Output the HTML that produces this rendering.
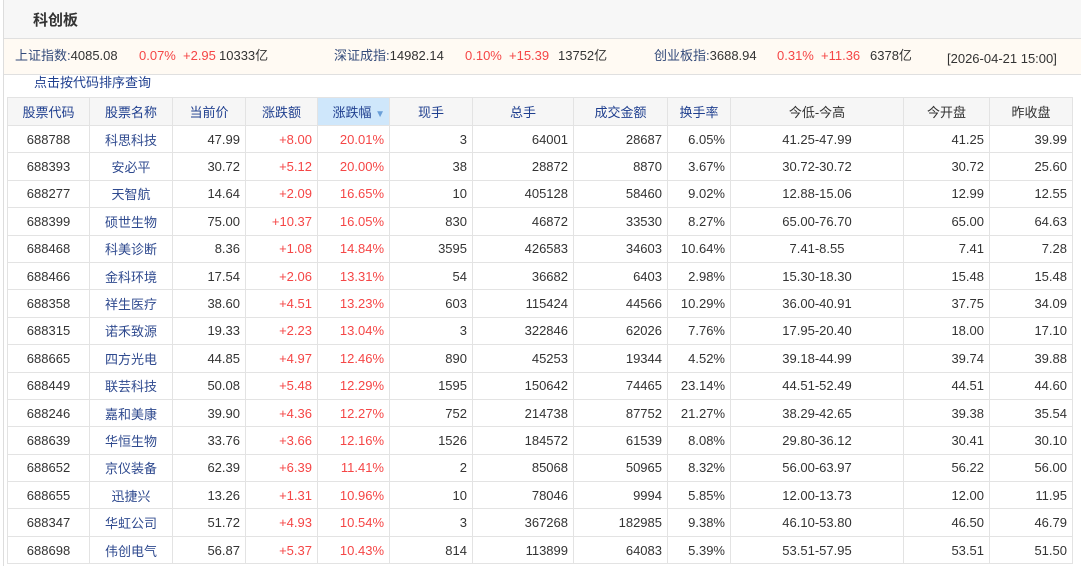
<!DOCTYPE html>
<html><head><meta charset="utf-8"><style>
body{margin:0;width:1081px;height:566px;overflow:hidden;background:#fff;font-family:"Liberation Sans","Noto Sans CJK SC",sans-serif;font-size:13px;color:#333;position:relative}
.lb{position:absolute;left:3px;top:0;width:1px;height:566px;background:#ddd}
.title{position:absolute;left:4px;top:0;width:1077px;height:38px;background:#f7f7f7;border-bottom:1px solid #e0e0e0}
.title b{position:absolute;left:29px;top:9px;font-size:15px;color:#333}
.idx{position:absolute;left:4px;top:39px;width:1077px;height:35px;background:#fffaf3;border-bottom:1px solid #e0e0e0}
.idx i{font-style:normal;position:absolute;top:9px;line-height:16px;white-space:nowrap}
.lab{color:#334a7a}.r{color:#f54646}
.link{position:absolute;left:34px;top:72px;color:#1f3f8f;font-size:13px}
table{position:absolute;left:7px;top:97px;border-collapse:collapse;table-layout:fixed}
td,th{border:1px solid #e3e3e3;height:26.4px;padding:0 5px;white-space:nowrap;font-weight:normal;overflow:hidden}
th{background:#f6f6f6;color:#1f3f8f;text-align:center;height:27px}
th.s{background:#cfe7fb;padding:0;text-align:right;padding-right:4px}
th.d{color:#333}
td{text-align:right}
td.c{text-align:center}
td.n{text-align:center;color:#2f4a8f}
td.red{color:#f54646}
</style></head><body>
<div class="lb"></div>
<div class="title"><b>科创板</b></div>
<div class="idx">
<i class="lab" style="left:11px">上证指数:<span style="color:#333">4085.08</span></i>
<i class="r" style="left:135px">0.07%</i><i class="r" style="left:179px">+2.95</i><i style="left:215px">10333亿</i>
<i class="lab" style="left:330px">深证成指:<span style="color:#333">14982.14</span></i>
<i class="r" style="left:461px">0.10%</i><i class="r" style="left:505px">+15.39</i><i style="left:554px">13752亿</i>
<i class="lab" style="left:650px">创业板指:<span style="color:#333">3688.94</span></i>
<i class="r" style="left:773px">0.31%</i><i class="r" style="left:817px">+11.36</i><i style="left:866px">6378亿</i>
<i style="left:943px;top:12px">[2026-04-21 15:00]</i>
</div>
<div class="link">点击按代码排序查询</div>
<table>
<colgroup><col style="width:82px"><col style="width:83px"><col style="width:73px"><col style="width:72px"><col style="width:72px"><col style="width:83px"><col style="width:101px"><col style="width:94px"><col style="width:63px"><col style="width:173px"><col style="width:86px"><col style="width:83px"></colgroup>
<tr><th>股票代码</th><th>股票名称</th><th>当前价</th><th>涨跌额</th><th class="s">涨跌幅 <span style="color:#6a9fd8;font-size:10px">▼</span></th><th>现手</th><th>总手</th><th>成交金额</th><th>换手率</th><th class="d">今低-今高</th><th class="d">今开盘</th><th class="d">昨收盘</th></tr>
<tr><td class="c">688788</td><td class="n">科思科技</td><td>47.99</td><td class="red">+8.00</td><td class="red">20.01%</td><td>3</td><td>64001</td><td>28687</td><td>6.05%</td><td class="c">41.25-47.99</td><td>41.25</td><td>39.99</td></tr>
<tr><td class="c">688393</td><td class="n">安必平</td><td>30.72</td><td class="red">+5.12</td><td class="red">20.00%</td><td>38</td><td>28872</td><td>8870</td><td>3.67%</td><td class="c">30.72-30.72</td><td>30.72</td><td>25.60</td></tr>
<tr><td class="c">688277</td><td class="n">天智航</td><td>14.64</td><td class="red">+2.09</td><td class="red">16.65%</td><td>10</td><td>405128</td><td>58460</td><td>9.02%</td><td class="c">12.88-15.06</td><td>12.99</td><td>12.55</td></tr>
<tr><td class="c">688399</td><td class="n">硕世生物</td><td>75.00</td><td class="red">+10.37</td><td class="red">16.05%</td><td>830</td><td>46872</td><td>33530</td><td>8.27%</td><td class="c">65.00-76.70</td><td>65.00</td><td>64.63</td></tr>
<tr><td class="c">688468</td><td class="n">科美诊断</td><td>8.36</td><td class="red">+1.08</td><td class="red">14.84%</td><td>3595</td><td>426583</td><td>34603</td><td>10.64%</td><td class="c">7.41-8.55</td><td>7.41</td><td>7.28</td></tr>
<tr><td class="c">688466</td><td class="n">金科环境</td><td>17.54</td><td class="red">+2.06</td><td class="red">13.31%</td><td>54</td><td>36682</td><td>6403</td><td>2.98%</td><td class="c">15.30-18.30</td><td>15.48</td><td>15.48</td></tr>
<tr><td class="c">688358</td><td class="n">祥生医疗</td><td>38.60</td><td class="red">+4.51</td><td class="red">13.23%</td><td>603</td><td>115424</td><td>44566</td><td>10.29%</td><td class="c">36.00-40.91</td><td>37.75</td><td>34.09</td></tr>
<tr><td class="c">688315</td><td class="n">诺禾致源</td><td>19.33</td><td class="red">+2.23</td><td class="red">13.04%</td><td>3</td><td>322846</td><td>62026</td><td>7.76%</td><td class="c">17.95-20.40</td><td>18.00</td><td>17.10</td></tr>
<tr><td class="c">688665</td><td class="n">四方光电</td><td>44.85</td><td class="red">+4.97</td><td class="red">12.46%</td><td>890</td><td>45253</td><td>19344</td><td>4.52%</td><td class="c">39.18-44.99</td><td>39.74</td><td>39.88</td></tr>
<tr><td class="c">688449</td><td class="n">联芸科技</td><td>50.08</td><td class="red">+5.48</td><td class="red">12.29%</td><td>1595</td><td>150642</td><td>74465</td><td>23.14%</td><td class="c">44.51-52.49</td><td>44.51</td><td>44.60</td></tr>
<tr><td class="c">688246</td><td class="n">嘉和美康</td><td>39.90</td><td class="red">+4.36</td><td class="red">12.27%</td><td>752</td><td>214738</td><td>87752</td><td>21.27%</td><td class="c">38.29-42.65</td><td>39.38</td><td>35.54</td></tr>
<tr><td class="c">688639</td><td class="n">华恒生物</td><td>33.76</td><td class="red">+3.66</td><td class="red">12.16%</td><td>1526</td><td>184572</td><td>61539</td><td>8.08%</td><td class="c">29.80-36.12</td><td>30.41</td><td>30.10</td></tr>
<tr><td class="c">688652</td><td class="n">京仪装备</td><td>62.39</td><td class="red">+6.39</td><td class="red">11.41%</td><td>2</td><td>85068</td><td>50965</td><td>8.32%</td><td class="c">56.00-63.97</td><td>56.22</td><td>56.00</td></tr>
<tr><td class="c">688655</td><td class="n">迅捷兴</td><td>13.26</td><td class="red">+1.31</td><td class="red">10.96%</td><td>10</td><td>78046</td><td>9994</td><td>5.85%</td><td class="c">12.00-13.73</td><td>12.00</td><td>11.95</td></tr>
<tr><td class="c">688347</td><td class="n">华虹公司</td><td>51.72</td><td class="red">+4.93</td><td class="red">10.54%</td><td>3</td><td>367268</td><td>182985</td><td>9.38%</td><td class="c">46.10-53.80</td><td>46.50</td><td>46.79</td></tr>
<tr><td class="c">688698</td><td class="n">伟创电气</td><td>56.87</td><td class="red">+5.37</td><td class="red">10.43%</td><td>814</td><td>113899</td><td>64083</td><td>5.39%</td><td class="c">53.51-57.95</td><td>53.51</td><td>51.50</td></tr>
</table>
</body></html>
